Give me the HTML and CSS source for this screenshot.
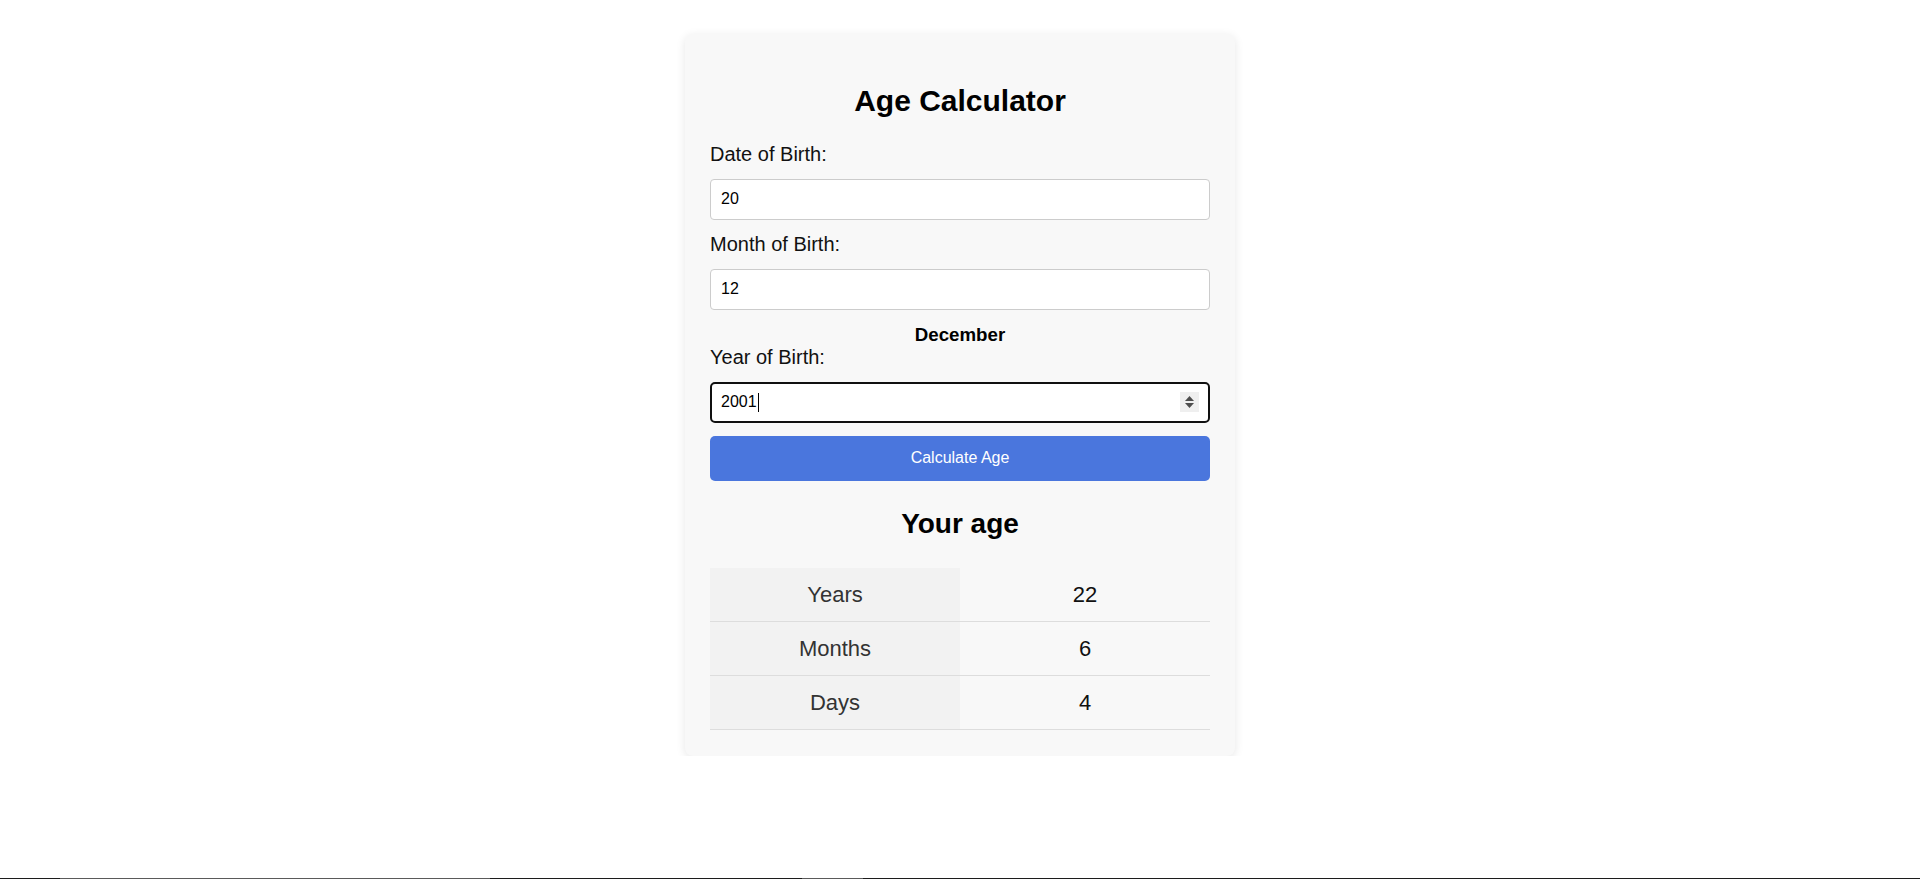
FILE: index.html
```html
<!DOCTYPE html>
<html lang="en">
<head>
<meta charset="utf-8">
<title>Age Calculator</title>
<link rel="stylesheet" href="styles.css">
</head>
<body>
<main class="page">
  <section class="card">
    <h1 class="title">Age Calculator</h1>

    <label class="label" for="day">Date of Birth:</label>
    <input class="field" id="day" type="text" value="20">

    <label class="label" for="month">Month of Birth:</label>
    <input class="field" id="month" type="text" value="12">

    <p class="month-name">December</p>

    <label class="label">Year of Birth:</label>
    <div class="field field-focused">
      <span class="field-value">2001</span><span class="caret"></span>
      <span class="spinner">
        <svg width="19" height="20" viewBox="0 0 19 20" aria-hidden="true">
          <polygon points="5,9 9.5,4 14,9" fill="#4d4d4d"/>
          <polygon points="5,11 9.5,16 14,11" fill="#4d4d4d"/>
        </svg>
      </span>
    </div>

    <button class="btn" type="button">Calculate Age</button>

    <h2 class="result-title">Your age</h2>

    <table class="result">
      <tbody>
        <tr><td class="result-key">Years</td><td class="result-val">22</td></tr>
        <tr><td class="result-key">Months</td><td class="result-val">6</td></tr>
        <tr><td class="result-key">Days</td><td class="result-val">4</td></tr>
      </tbody>
    </table>
  </section>
</main>
<div class="screen-edge"></div>
</body>
</html>
```

FILE: styles.css
```css
* {
  box-sizing: border-box;
}

html, body {
  margin: 0;
  padding: 0;
  background: #ffffff;
}

body {
  font-family: "Liberation Sans", Arial, sans-serif;
  color: #000;
}

.page {
  display: flex;
  justify-content: center;
  padding-top: 34px;
}

.card {
  width: 550px;
  padding: 25px 25px 26px;
  background: #f8f8f8;
  border-radius: 8px;
  box-shadow: 0 2px 10px rgba(0, 0, 0, 0.1);
}

.title {
  margin: 24.5px 0 25px;
  font-size: 30px;
  font-weight: bold;
  line-height: normal;
  text-align: center;
}

.label {
  display: block;
  margin: 0 0 13px;
  font-size: 20px;
  line-height: normal;
  color: #111;
}

.field {
  display: block;
  width: 100%;
  height: 41px;
  margin: 0 0 13px;
  padding: 0 10px;
  border: 1px solid #cccccc;
  border-radius: 4px;
  background: #ffffff;
  font-family: "Liberation Sans", Arial, sans-serif;
  font-size: 16px;
  color: #000;
  outline: none;
}

.field-focused {
  display: flex;
  align-items: center;
  padding: 0 9px;
  border: 2px solid #101010;
  border-radius: 5px;
}

.field-value {
  line-height: 18px;
}

.caret {
  width: 1px;
  height: 19px;
  margin-left: 1px;
  background: #000;
}

.spinner {
  display: flex;
  margin-left: auto;
  width: 19px;
  height: 20px;
  margin-right: 0;
  background: #efefef;
}

.month-name {
  margin: 14px 0 0;
  font-size: 18.72px;
  font-weight: bold;
  line-height: normal;
  text-align: center;
}

.btn {
  display: block;
  width: 100%;
  height: 45px;
  margin: 0;
  padding: 0;
  border: none;
  border-radius: 5px;
  background: #4a76dd;
  color: #ffffff;
  font-family: "Liberation Sans", Arial, sans-serif;
  font-size: 16px;
}

.result-title {
  margin: 27.5px 0 28px;
  font-size: 28px;
  font-weight: bold;
  line-height: normal;
  text-align: center;
}

.result {
  width: 100%;
  border-collapse: collapse;
  font-size: 22px;
}

.result td {
  width: 50%;
  padding: 14px;
  line-height: 25px;
  text-align: center;
  border-bottom: 1px solid #dddddd;
}

.result-key {
  background: #f2f2f2;
  color: #333333;
}

.result-val {
  color: #111111;
}

.screen-edge {
  position: fixed;
  left: 0;
  right: 0;
  bottom: 0;
  height: 1px;
  background: linear-gradient(to right,
    #1c1c1c 0, #1c1c1c 60px,
    #5a5a5a 60px, #5a5a5a 490px,
    #1c1c1c 490px, #1c1c1c 802px,
    #5a5a5a 802px, #5a5a5a 863px,
    #1c1c1c 863px, #1c1c1c 100%);
}
```
